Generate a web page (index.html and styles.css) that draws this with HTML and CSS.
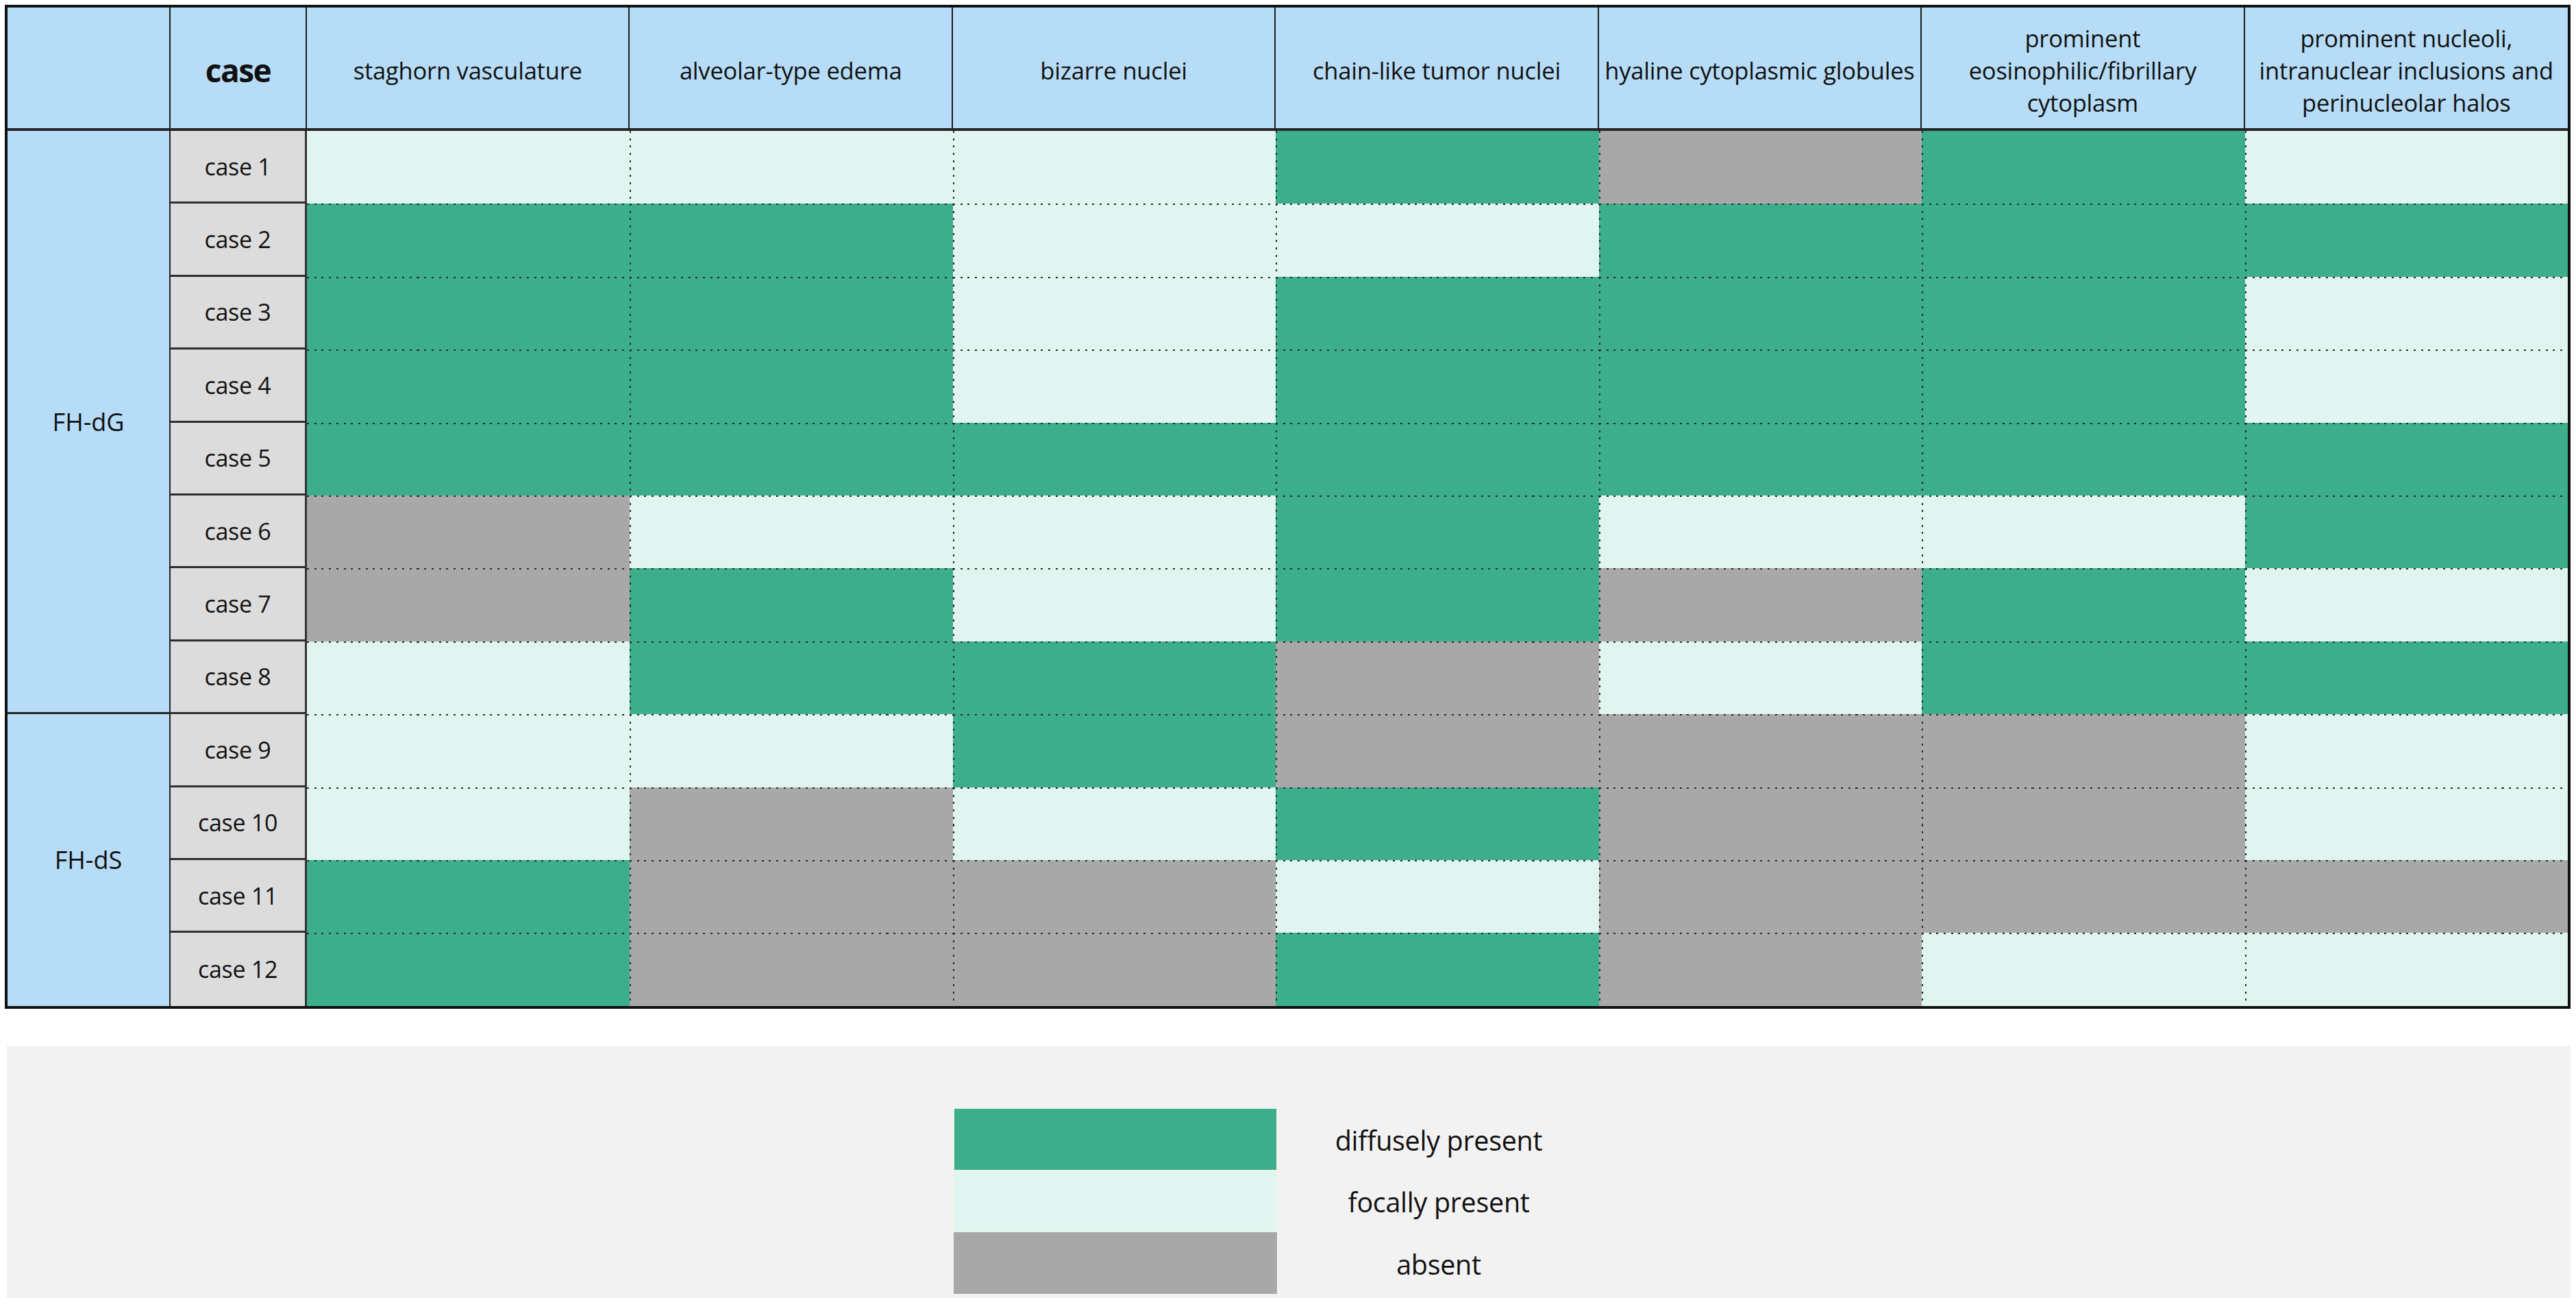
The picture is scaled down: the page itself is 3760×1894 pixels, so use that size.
FILE: index.html
```html
<!DOCTYPE html>
<html lang="en">
<head>
<meta charset="utf-8">
<title>FH-deficient cases: histologic features</title>
<link rel="stylesheet" href="styles.css">
</head>
<body>
<div class="table">
  <div class="hrow">
    <div class="hcell"></div>
    <div class="hcell hcase">case</div>
    <div class="hcell">staghorn vasculature</div>
    <div class="hcell">alveolar-type edema</div>
    <div class="hcell">bizarre nuclei</div>
    <div class="hcell">chain-like tumor nuclei</div>
    <div class="hcell">hyaline cytoplasmic globules</div>
    <div class="hcell">prominent<br>eosinophilic/fibrillary<br>cytoplasm</div>
    <div class="hcell last">prominent nucleoli,<br>intranuclear inclusions and<br>perinucleolar halos</div>
  </div>
  <div class="row">
    <div class="group g1">FH-dG</div>
    <div class="case">case 1</div>
    <div class="d f"></div><div class="d f"></div><div class="d f"></div><div class="d g"></div><div class="d a"></div><div class="d g"></div><div class="d f"></div>
  </div>
  <div class="row">
    <div class="case">case 2</div>
    <div class="d g"></div><div class="d g"></div><div class="d f"></div><div class="d f"></div><div class="d g"></div><div class="d g"></div><div class="d g"></div>
  </div>
  <div class="row">
    <div class="case">case 3</div>
    <div class="d g"></div><div class="d g"></div><div class="d f"></div><div class="d g"></div><div class="d g"></div><div class="d g"></div><div class="d f"></div>
  </div>
  <div class="row">
    <div class="case">case 4</div>
    <div class="d g"></div><div class="d g"></div><div class="d f"></div><div class="d g"></div><div class="d g"></div><div class="d g"></div><div class="d f"></div>
  </div>
  <div class="row">
    <div class="case">case 5</div>
    <div class="d g"></div><div class="d g"></div><div class="d g"></div><div class="d g"></div><div class="d g"></div><div class="d g"></div><div class="d g"></div>
  </div>
  <div class="row">
    <div class="case">case 6</div>
    <div class="d a"></div><div class="d f"></div><div class="d f"></div><div class="d g"></div><div class="d f"></div><div class="d f"></div><div class="d g"></div>
  </div>
  <div class="row">
    <div class="case">case 7</div>
    <div class="d a"></div><div class="d g"></div><div class="d f"></div><div class="d g"></div><div class="d a"></div><div class="d g"></div><div class="d f"></div>
  </div>
  <div class="row">
    <div class="case">case 8</div>
    <div class="d f"></div><div class="d g"></div><div class="d g"></div><div class="d a"></div><div class="d f"></div><div class="d g"></div><div class="d g"></div>
  </div>
  <div class="row">
    <div class="group g2">FH-dS</div>
    <div class="case">case 9</div>
    <div class="d f"></div><div class="d f"></div><div class="d g"></div><div class="d a"></div><div class="d a"></div><div class="d a"></div><div class="d f"></div>
  </div>
  <div class="row">
    <div class="case">case 10</div>
    <div class="d f"></div><div class="d a"></div><div class="d f"></div><div class="d g"></div><div class="d a"></div><div class="d a"></div><div class="d f"></div>
  </div>
  <div class="row">
    <div class="case">case 11</div>
    <div class="d g"></div><div class="d a"></div><div class="d a"></div><div class="d f"></div><div class="d a"></div><div class="d a"></div><div class="d a"></div>
  </div>
  <div class="row">
    <div class="case last">case 12</div>
    <div class="d g"></div><div class="d a"></div><div class="d a"></div><div class="d g"></div><div class="d a"></div><div class="d f"></div><div class="d f"></div>
  </div>
</div>

<div class="legend">
  <div class="legend-grid">
    <div class="swatch g"></div><div class="label">diffusely present</div>
    <div class="swatch f"></div><div class="label">focally present</div>
    <div class="swatch a"></div><div class="label">absent</div>
  </div>
</div>
</body>
</html>
```

FILE: styles.css
```css
html, body {
  margin: 0;
  padding: 0;
  background: #ffffff;
}

body {
  font-family: "Open Sans", "Noto Sans", "DejaVu Sans", sans-serif;
  color: #111111;
  width: 3760px;
  height: 1894px;
  overflow: hidden;
}

.table {
  box-sizing: border-box;
  margin: 7px 0 0 7px;
  width: 3745px;
  border: 4px solid #111111;
  display: grid;
  grid-template-columns: 238px 199px repeat(7, 1fr);
  grid-template-rows: 180px repeat(12, 106.4px);
}

.hrow, .row {
  display: contents;
}

.hcell {
  box-sizing: border-box;
  background: #b6dcf7;
  border-right: 2px solid #1c1c1c;
  border-bottom: 4px solid #262626;
  display: flex;
  align-items: center;
  justify-content: center;
  text-align: center;
  font-size: 34.5px;
  line-height: 47px;
  letter-spacing: -0.2px;
  padding-top: 6px;
}

.hcell.last {
  border-right: none;
}

.hcase {
  font-weight: 700;
  font-size: 46px;
  letter-spacing: -1.5px;
}

.group {
  box-sizing: border-box;
  grid-column: 1;
  background: #b6dcf7;
  border-right: 2px solid #222222;
  display: flex;
  align-items: center;
  justify-content: center;
  font-size: 36px;
}

.group.g1 {
  grid-row: span 8;
  border-bottom: 3px solid #262626;
}

.group.g2 {
  grid-row: span 4;
}

.case {
  box-sizing: border-box;
  grid-column: 2;
  background: #dcdcdc;
  border-right: 3px solid #333333;
  border-bottom: 3px solid #2e2e2e;
  display: flex;
  align-items: center;
  justify-content: center;
  font-size: 34px;
  letter-spacing: -0.3px;
}

.case.last {
  border-bottom: none;
}

.d {
  background-image:
    repeating-linear-gradient(90deg, #2a2a2a 0 3px, transparent 3px 10.7px),
    repeating-linear-gradient(180deg, #2a2a2a 0 3px, transparent 3px 10.7px);
  background-size: 100% 2px, 2px 100%;
  background-position: 0 0, 0 0;
  background-repeat: no-repeat;
}

.hrow + .row .d {
  background-size: 0 0, 2px 100%;
}

.case + .d {
  background-size: 100% 2px, 0 0;
}

.hrow + .row .case + .d {
  background-size: 0 0, 0 0;
}

.g {
  background-color: #3cae8b;
}

.f {
  background-color: #e0f5ef;
}

.a {
  background-color: #a7a8a7;
}

.legend {
  box-sizing: border-box;
  margin: 54px 0 0 10px;
  width: 3742px;
  height: 368px;
  background: #f2f2f2;
  padding: 91px 0 0 1382px;
}

.legend-grid {
  display: grid;
  grid-template-columns: 472px 472px;
  grid-template-rows: repeat(3, 90.5px);
}

.swatch {
  box-sizing: border-box;
}

.swatch.g {
  border: 1px solid #e6f2d6;
  border-bottom: none;
}

.swatch.f {
  border: 1px solid #eef6dc;
}

.label {
  display: flex;
  align-items: center;
  justify-content: center;
  font-size: 39.5px;
  letter-spacing: -0.3px;
  padding-top: 4px;
}
```
